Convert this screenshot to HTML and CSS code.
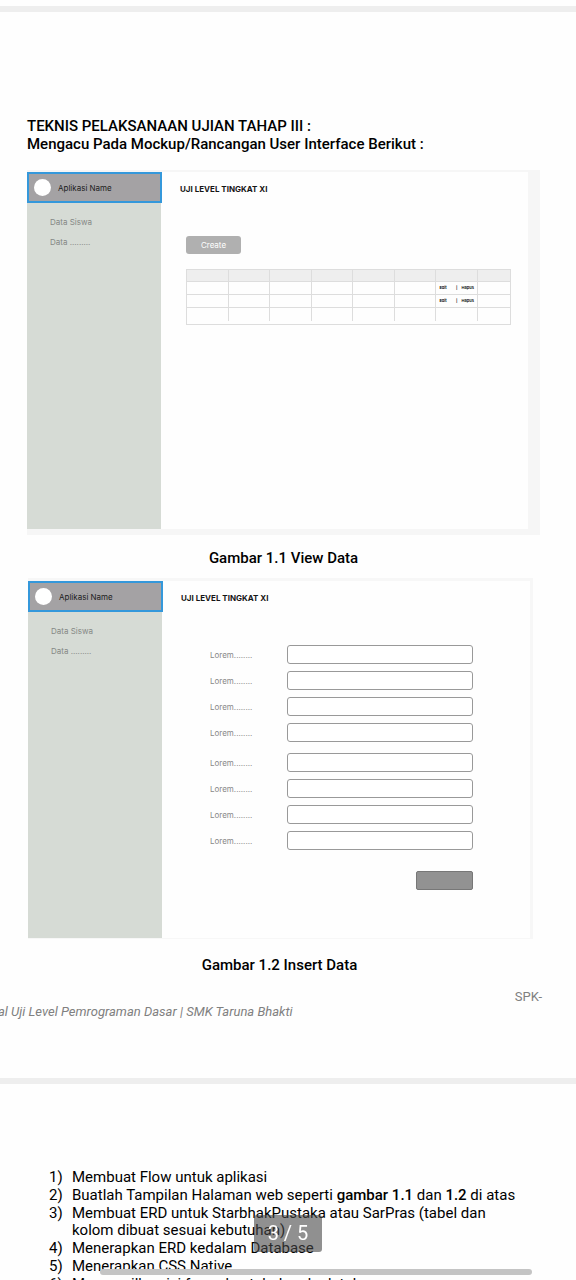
FILE: index.html
```html
<!DOCTYPE html>
<html lang="id">
<head>
<meta charset="utf-8">
<meta name="viewport" content="width=device-width, initial-scale=1">
<title>Soal Uji Level Pemrograman Dasar</title>
<link rel="stylesheet" href="styles.css">
</head>
<body>
<main class="viewer">
  <section class="page page-current">
    <h1 class="heading">TEKNIS PELAKSANAAN UJIAN TAHAP III :<br>Mengacu Pada Mockup/Rancangan User Interface Berikut :</h1>

    <figure class="figure">
      <div class="mockup mockup-view">
        <aside class="sidebar">
          <div class="brand"><span class="avatar"></span>Aplikasi Name</div>
          <nav class="menu"><a href="#siswa">Data Siswa</a><a href="#data">Data .........</a></nav>
        </aside>
        <div class="content">
          <h2 class="title">UJI LEVEL TINGKAT XI</h2>
          <button class="create" type="button">Create</button>
          <div class="grid-frame">
            <table class="grid">
              <thead><tr><th></th><th></th><th></th><th></th><th></th><th></th><th></th><th></th></tr></thead>
              <tbody>
                <tr><td></td><td></td><td></td><td></td><td></td><td></td><td><div class="actions"><span>Edit</span><span class="bar">|</span><span>Hapus</span></div></td><td></td></tr>
                <tr><td></td><td></td><td></td><td></td><td></td><td></td><td><div class="actions"><span>Edit</span><span class="bar">|</span><span>Hapus</span></div></td><td></td></tr>
                <tr><td></td><td></td><td></td><td></td><td></td><td></td><td></td><td></td></tr>
              </tbody>
            </table>
          </div>
        </div>
      </div>
      <figcaption class="caption">Gambar 1.1 View Data</figcaption>
    </figure>

    <figure class="figure">
      <div class="mockup mockup-insert">
        <aside class="sidebar">
          <div class="brand"><span class="avatar"></span>Aplikasi Name</div>
          <nav class="menu"><a href="#siswa2">Data Siswa</a><a href="#data2">Data .........</a></nav>
        </aside>
        <div class="content">
          <h2 class="title">UJI LEVEL TINGKAT XI</h2>
          <form class="form">
            <div class="field-group">
              <label class="field"><span>Lorem........</span><input type="text"></label>
              <label class="field"><span>Lorem........</span><input type="text"></label>
              <label class="field"><span>Lorem........</span><input type="text"></label>
              <label class="field"><span>Lorem........</span><input type="text"></label>
            </div>
            <div class="field-group">
              <label class="field"><span>Lorem........</span><input type="text"></label>
              <label class="field"><span>Lorem........</span><input type="text"></label>
              <label class="field"><span>Lorem........</span><input type="text"></label>
              <label class="field"><span>Lorem........</span><input type="text"></label>
            </div>
            <button class="submit" type="button" aria-label="Simpan"></button>
          </form>
        </div>
      </div>
      <figcaption class="caption caption-insert">Gambar 1.2 Insert Data</figcaption>
    </figure>

    <footer class="footer">
      <p class="code">SPK-</p>
      <p class="source">al Uji Level Pemrograman Dasar | SMK Taruna Bhakti</p>
    </footer>
  </section>

  <section class="page page-next">
    <ol class="steps">
      <li>Membuat Flow untuk aplikasi</li>
      <li>Buatlah Tampilan Halaman web seperti <b>gambar 1.1</b> dan <b>1.2</b> di atas</li>
      <li>Membuat ERD untuk StarbhakPustaka atau SarPras (tabel dan kolom dibuat sesuai kebutuhan)</li>
      <li>Menerapkan ERD kedalam Database</li>
      <li>Menerapkan CSS Native</li>
      <li>Menampilkan isi form dan tabel pada database</li>
    </ol>
  </section>
</main>
<div class="page-indicator">3 / 5</div>
<div class="scrollbar"></div>
</body>
</html>
```
FILE: styles.css
```css
* { box-sizing: border-box; }
body {
  margin: 0;
  background: #fefefe;
  color: #000;
  font-family: Roboto, sans-serif;
  font-size: 15px;
  line-height: 18px;
}
h1, h2, p, figure, ol { margin: 0; }
.viewer { height: 100vh; overflow: hidden; padding-top: 6px; }
.page { border-top: 6px solid #eee; }
.page-current { padding: 105px 36px 58px 27px; }
.heading { margin-bottom: 17px; font-size: 15px; font-weight: 500; line-height: 18px; }
.caption { text-align: center; font-weight: 500; padding: 14px 0 11px; }
.caption-insert { padding: 17px 8px 16px 0; }

.mockup {
  display: grid;
  grid-template-columns: 134px 1fr;
  font-family: Inter, sans-serif;
  font-size: 8px;
  line-height: 12px;
}
.mockup-view {
  height: 365px;
  border: solid #f6f6f6;
  border-width: 2px 12px 6px 0;
}
.mockup-insert {
  height: 361px;
  margin: 0 7px 0 1px;
  border: solid #f7f7f7;
  border-width: 3px 3px 1px 0;
}
.sidebar { background: #d6dbd5; }
.brand {
  display: flex;
  align-items: center;
  gap: 7px;
  height: 31px;
  margin-right: -1px;
  padding-left: 5px;
  border: 2px solid #3498db;
  background: #a4a2a4;
  color: #1c1c1c;
}
.avatar { width: 17px; height: 17px; border-radius: 50%; background: #fff; }
.menu { display: grid; gap: 8px; padding: 13px 23px; }
.menu a { color: #858885; text-decoration: none; }
.content { padding: 11px 17px 0 19px; }
.title { font-size: 8px; font-weight: 700; line-height: 12px; color: #151515; }
.create {
  display: block;
  width: 55px;
  height: 18px;
  margin: 41px 0 15px 6px;
  padding: 0;
  border: 0;
  border-radius: 3px;
  background: #b0b0b0;
  color: #fff;
  font: 8px/18px Inter, sans-serif;
}
.grid-frame { margin-left: 6px; padding-bottom: 3px; border: 1px solid #ddd; }
.grid {
  width: 100%;
  table-layout: fixed;
  border-spacing: 0;
}
.grid th, .grid td {
  width: 13%;
  height: 13px;
  padding: 0;
  border: solid #ddd;
  border-width: 0 1px 1px 0;
}
.grid th { background: #eee; height: 12px; }
.grid th:last-child { width: 10%; }
.grid tr > :last-child { border-right: 0; }
.grid tbody tr:last-child td { border-bottom: 0; }
.actions {
  display: flex;
  padding: 0 3px;
  font-size: 4px;
  line-height: 8px;
  font-weight: 600;
}
.bar { margin: 0 4px 0 auto; }
.form { padding: 41px 40px 0 29px; }
.field-group { display: grid; gap: 7px; margin-bottom: 11px; }
.field { display: grid; grid-template-columns: 77px 1fr; align-items: center; color: #888; }
.field input {
  width: 100%;
  height: 19px;
  padding: 0 4px;
  border: 1px solid #999;
  border-radius: 3px;
  background: #fff;
  font: inherit;
}
.submit {
  display: block;
  width: 57px;
  height: 19px;
  margin: 21px 0 0 auto;
  border: 1px solid #777;
  border-radius: 2px;
  background: #929292;
}
.footer { color: #808080; font-size: 13px; }
.code { margin-right: -2px; text-align: right; line-height: 14px; }
.source { margin-left: -29px; font-style: italic; line-height: 16px; }

.page-next { padding: 85px 50px 0 49px; }
.steps { display: grid; gap: 1px; padding: 0; list-style: none; counter-reset: step; line-height: 17px; }
.steps li { display: block; padding-left: 23px; counter-increment: step; }
.steps li::before { content: counter(step) ")"; float: left; margin-left: -23px; }
.steps b { font-weight: 500; }

.page-indicator {
  position: fixed;
  left: 50%;
  bottom: 28px;
  width: 68px;
  margin-left: -34px;
  border-radius: 3px;
  background: rgba(70, 70, 70, 0.6);
  color: #fff;
  font-size: 20px;
  line-height: 37px;
  text-align: center;
}
.scrollbar {
  position: fixed;
  right: 44px;
  bottom: 5px;
  left: 100px;
  height: 6px;
  border-radius: 3px;
  background: #c4c4c4;
}
```
